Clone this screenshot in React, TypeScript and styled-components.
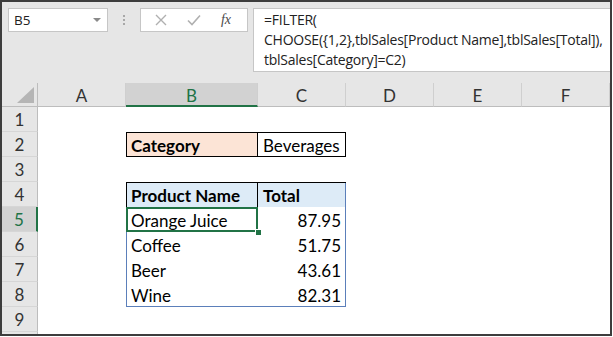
import * as React from 'react'
import styled, { createGlobalStyle, css } from 'styled-components'

const GREEN = '#217346'
const BLUE = '#5b7fba'
const BLACK = '#000'

const GlobalStyle = createGlobalStyle`
  html, body {
    margin: 0;
    padding: 0;
    background: #fff;
  }
  * {
    box-sizing: border-box;
  }
`

const Frame = styled.div`
  width: 612px;
  height: 336px;
  border: 2px solid #3d3d3d;
  background: #e6e6e6;
  display: flex;
  flex-direction: column;
  overflow: hidden;
`

// 上のツールバー（名前ボックス + 数式バー）
const Toolbar = styled.div`
  height: 81px;
  flex: none;
  display: flex;
  align-items: flex-start;
  padding: 6px 0 0 6px;
  font-family: 'Open Sans', 'Noto Sans', sans-serif;
  color: #222;
`

const NameBox = styled.div`
  width: 100px;
  height: 24px;
  background: #fff;
  border: 1px solid #c6c6c6;
  display: flex;
  align-items: center;
  justify-content: space-between;
  padding: 0 6px 0 5px;
  font-size: 13.5px;
`

const DropArrow = styled.span`
  width: 0;
  height: 0;
  border-left: 4px solid transparent;
  border-right: 4px solid transparent;
  border-top: 4px solid #8a8a8a;
`

const Grip = styled.div`
  width: 32px;
  height: 24px;
  display: flex;
  flex-direction: column;
  align-items: center;
  justify-content: center;
  gap: 2px;
  span {
    width: 2px;
    height: 2px;
    background: #a8a8a8;
  }
`

const ButtonBox = styled.div`
  width: 108px;
  height: 24px;
  background: #fff;
  border: 1px solid #c6c6c6;
  display: flex;
  align-items: center;
  justify-content: space-around;
  padding: 0 6px 0 4px;
`

const FxLabel = styled.span`
  font-family: 'Liberation Serif', serif;
  font-style: italic;
  font-size: 14px;
  color: #4a4a4a;
`

const FormulaBox = styled.div`
  flex: 1;
  height: 64px;
  margin-left: 5px;
  background: #fff;
  border: 1px solid #c6c6c6;
  border-right: none;
  padding: 1px 0 0 10px;
  font-size: 14px;
  letter-spacing: -0.25px;
  line-height: 20px;
  white-space: pre;
`

const Sheet = styled.div`
  flex: 1;
  display: grid;
  grid-template-columns: 36px 88px 132px 88px 88px 88px 88px;
  grid-template-rows: 24px repeat(10, 25px);
  background: #fff;
  font-family: Lato, 'Liberation Sans', sans-serif;
`

const Corner = styled.div`
  background: #e6e6e6;
  border-right: 1px solid #bdbdbd;
  border-bottom: 1px solid #bdbdbd;
  display: flex;
  align-items: flex-end;
  justify-content: flex-end;
  padding: 0 3px 3px 0;
`

const ColHead = styled.div<{ $active?: boolean }>`
  background: ${(p) => (p.$active ? '#d2d2d2' : '#e6e6e6')};
  border-right: 1px solid #cfcfcf;
  border-bottom: ${(p) => (p.$active ? `2px solid ${GREEN}` : '1px solid #bdbdbd')};
  color: ${(p) => (p.$active ? GREEN : '#333')};
  font-size: 17px;
  display: flex;
  align-items: center;
  justify-content: center;
  padding-top: 2px;
`

const RowHead = styled.div<{ $active?: boolean }>`
  background: ${(p) => (p.$active ? '#d2d2d2' : '#e6e6e6')};
  border-bottom: 1px solid #d6d6d6;
  border-right: ${(p) => (p.$active ? `2px solid ${GREEN}` : '1px solid #bdbdbd')};
  color: ${(p) => (p.$active ? GREEN : '#333')};
  font-size: 17px;
  display: flex;
  align-items: center;
  justify-content: center;
`

type Edges = { t?: string; r?: string; b?: string; l?: string }

const edgeShadow = (e?: Edges) => {
  if (!e) return 'none'
  const parts: string[] = []
  if (e.t) parts.push(`inset 0 1px 0 ${e.t}`)
  if (e.r) parts.push(`inset -1px 0 0 ${e.r}`)
  if (e.b) parts.push(`inset 0 -1px 0 ${e.b}`)
  if (e.l) parts.push(`inset 1px 0 0 ${e.l}`)
  return parts.length ? parts.join(', ') : 'none'
}

const Cell = styled.div<{ $fill?: string; $bold?: boolean; $right?: boolean; $edges?: Edges; $selected?: boolean }>`
  position: relative;
  background: ${(p) => p.$fill || '#fff'};
  font-weight: ${(p) => (p.$bold ? 700 : 400)};
  font-size: 17px;
  color: #000;
  display: flex;
  align-items: center;
  justify-content: ${(p) => (p.$right ? 'flex-end' : 'flex-start')};
  padding: 2px 5px 0 5px;
  white-space: nowrap;
  box-shadow: ${(p) => edgeShadow(p.$edges)};
  ${(p) =>
    p.$selected &&
    css`
      box-shadow: inset 0 0 0 2px ${GREEN};
    `}
`

// 選択セルの右下のフィルハンドル
const FillHandle = styled.span`
  position: absolute;
  right: -4px;
  bottom: -4px;
  width: 7px;
  height: 7px;
  background: ${GREEN};
  border: 1px solid #fff;
  z-index: 2;
`

type CellData = {
  text?: string
  fill?: string
  bold?: boolean
  right?: boolean
  edges?: Edges
  selected?: boolean
}

const cols = ['A', 'B', 'C', 'D', 'E', 'F']

const rows: Record<number, { B?: CellData; C?: CellData }> = {
  2: {
    B: { text: 'Category', bold: true, fill: '#fce4d6', edges: { t: BLACK, b: BLACK, l: BLACK, r: BLACK } },
    C: { text: 'Beverages', edges: { t: BLACK, b: BLACK, r: BLACK } },
  },
  4: {
    B: { text: 'Product Name', bold: true, fill: '#ddebf7', edges: { t: BLACK, l: BLACK, r: BLACK } },
    C: { text: 'Total', bold: true, fill: '#ddebf7', edges: { t: BLACK, r: BLUE } },
  },
  5: {
    B: { text: 'Orange Juice', selected: true },
    C: { text: '87.95', right: true, edges: { r: BLUE } },
  },
  6: {
    B: { text: 'Coffee', edges: { l: BLUE } },
    C: { text: '51.75', right: true, edges: { r: BLUE } },
  },
  7: {
    B: { text: 'Beer', edges: { l: BLUE } },
    C: { text: '43.61', right: true, edges: { r: BLUE } },
  },
  8: {
    B: { text: 'Wine', edges: { l: BLUE, b: BLUE } },
    C: { text: '82.31', right: true, edges: { r: BLUE, b: BLUE } },
  },
}

const XIcon = () => (
  <svg width="12" height="12" viewBox="0 0 12 12">
    <path d="M1 1 L11 11 M11 1 L1 11" stroke="#b0b0b0" strokeWidth="1.4" fill="none" />
  </svg>
)

const CheckIcon = () => (
  <svg width="14" height="12" viewBox="0 0 14 12">
    <path d="M1 6.5 L5 10.5 L13 1.5" stroke="#b0b0b0" strokeWidth="1.6" fill="none" />
  </svg>
)

const CornerTriangle = () => (
  <svg width="17" height="16" viewBox="0 0 17 16">
    <polygon points="17,0 17,16 0,16" fill="#b5b5b5" />
  </svg>
)

export default function App() {
  const rowNums = [1, 2, 3, 4, 5, 6, 7, 8, 9, 10]
  return (
    <>
      <GlobalStyle />
      <Frame>
        <Toolbar>
          <NameBox>
            B5
            <DropArrow />
          </NameBox>
          <Grip>
            <span />
            <span />
            <span />
          </Grip>
          <ButtonBox>
            <XIcon />
            <CheckIcon />
            <FxLabel>fx</FxLabel>
          </ButtonBox>
          <FormulaBox>
            {'=FILTER(\nCHOOSE({1,2},tblSales[Product Name],tblSales[Total]),\ntblSales[Category]=C2)'}
          </FormulaBox>
        </Toolbar>
        <Sheet>
          <Corner>
            <CornerTriangle />
          </Corner>
          {cols.map((c) => (
            <ColHead key={c} $active={c === 'B'}>
              {c}
            </ColHead>
          ))}
          {rowNums.map((n) => (
            <React.Fragment key={n}>
              {/* 10行目は下端でほぼ隠れるので番号は出さない */}
              <RowHead $active={n === 5}>{n < 10 ? n : null}</RowHead>
              {cols.map((c) => {
                const d = (rows[n] as Record<string, CellData> | undefined)?.[c]
                return (
                  <Cell
                    key={c}
                    $fill={d?.fill}
                    $bold={d?.bold}
                    $right={d?.right}
                    $edges={d?.edges}
                    $selected={d?.selected}
                  >
                    {d?.text}
                    {d?.selected && <FillHandle />}
                  </Cell>
                )
              })}
            </React.Fragment>
          ))}
        </Sheet>
      </Frame>
    </>
  )
}
